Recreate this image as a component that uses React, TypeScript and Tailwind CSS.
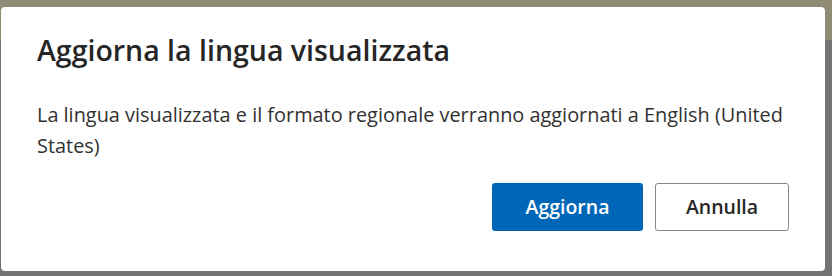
import React from 'react';

const App: React.FC = () => {
  return (
    <div
      className="w-[832px] h-[276px] overflow-hidden bg-[#737373] relative"
      style={{ fontFamily: '"Open Sans", "Noto Sans", sans-serif' }}
    >
      {/* dimmed page behind the dialog */}
      <div className="absolute inset-x-0 top-0 h-[40px] bg-[#8f8b75]" />
      <div className="relative pt-[7px] pl-[1px]">
        <div className="w-[824px] h-[264px] bg-white rounded-[4px] px-[36px] pt-[25px] flex flex-col">
          <h1 className="text-[28.5px] leading-[36px] font-semibold text-[#262626]">
            Aggiorna la lingua visualizzata
          </h1>
          <p className="mt-[31px] text-[19.9px] leading-[31px] text-[#323130]">
            La lingua visualizzata e il formato regionale verranno aggiornati a English (United States)
          </p>
          <div className="mt-auto mb-[40px] flex justify-end gap-[12px]">
            <button className="w-[151px] h-[48px] rounded-[3px] bg-[#0067b8] text-white text-[19.5px] font-semibold">
              Aggiorna
            </button>
            <button className="w-[134px] h-[48px] rounded-[3px] border border-[#8a8886] bg-white text-[#262626] text-[19.5px] font-semibold">
              Annulla
            </button>
          </div>
        </div>
      </div>
    </div>
  );
};

export default App;
